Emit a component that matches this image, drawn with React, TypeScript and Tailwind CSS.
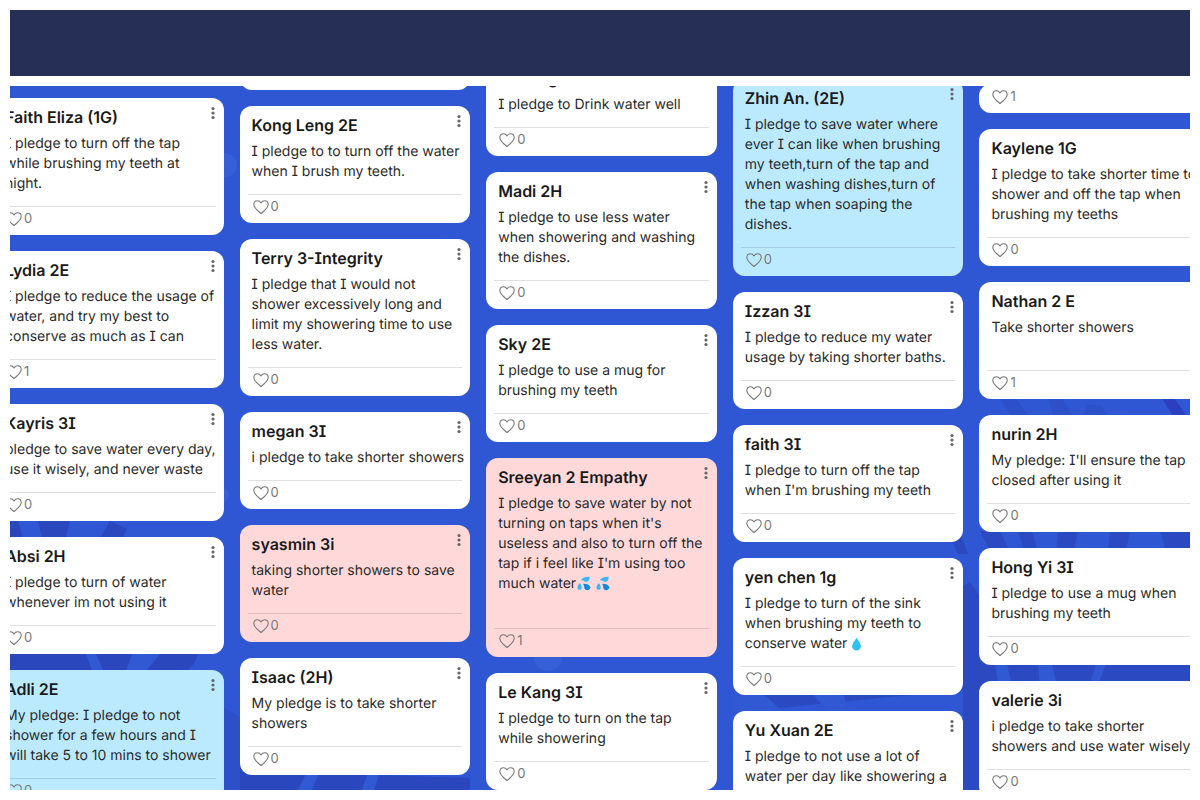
import { ReactNode } from "react";

type Tone = "white" | "pink" | "blue";
type Post = { title?: string; lines?: ReactNode[]; likes: number; tone?: Tone; spacer?: string };

const tones: Record<Tone, string> = {
  white: "bg-white",
  pink: "bg-[#ffd9d9]",
  blue: "bg-[#bbeaff]",
};

function Splash() {
  return (
    <svg viewBox="0 0 16 16" className="mr-1 inline-block size-[15px] align-[-3px]" role="img" aria-label="sweat droplets">
      <path d="M5 4.500C8 1 11 .5 14.500 .8c.4 2.700-.8 5-3 5.400C9 6.600 8.600 4 5 4.500z" fill="#39b8f5" />
      <path d="M7.500 8.500c3-.6 6.500.5 8 3.500-.8 2.700-3 3.800-5.200 2.700-2.300-1.200-.8-4-2.800-6.200z" fill="#1689d8" />
      <path d="M4 7.500c1.800 2.300 2.500 4.300 1.900 6-.6 1.500-2.600 1.700-3.700.6C.7 12.500 1.800 10 4 7.500z" fill="#39b8f5" />
    </svg>
  );
}

function Drop() {
  return (
    <svg viewBox="0 0 12 16" className="inline-block h-[14px] w-[11px] align-[-3px]" role="img" aria-label="droplet">
      <path d="M6 .8C8 4 11 7.500 11 10.500a5 5 0 0 1-10 0C1 7.500 4 4 6 .8z" fill="#29c1f6" />
    </svg>
  );
}

const columns: { offset: string; posts: Post[] }[] = [
  {
    offset: "mt-3",
    posts: [
      { title: "Faith Eliza (1G)", lines: ["I pledge to turn off the tap", "while brushing my teeth at", "night."], likes: 0 },
      { title: "Lydia 2E", lines: ["I pledge to reduce the usage of", "water, and try my best to", "conserve as much as I can"], likes: 1 },
      { title: "Kayris 3I", lines: ["pledge to save water every day,", "use it wisely, and never waste"], likes: 0 },
      { title: "Absi 2H", lines: ["I pledge to turn of water", "whenever im not using it"], likes: 0 },
      { title: "Adli 2E", lines: ["My pledge: I pledge to not", "shower for a few hours and I", "will take 5 to 10 mins to shower"], likes: 0, tone: "blue" },
    ],
  },
  {
    offset: "-mt-[25px]",
    posts: [
      { likes: 0 },
      { title: "Kong Leng 2E", lines: ["I pledge to to turn off the water", "when I brush my teeth."], likes: 0 },
      { title: "Terry 3-Integrity", lines: ["I pledge that I would not", "shower excessively long and", "limit my showering time to use", "less water."], likes: 0 },
      { title: "megan 3I", lines: ["i pledge to take shorter showers"], likes: 0 },
      { title: "syasmin 3i", lines: ["taking shorter showers to save", "water"], likes: 0, tone: "pink" },
      { title: "Isaac (2H)", lines: ["My pledge is to take shorter", "showers"], likes: 0 },
    ],
  },
  {
    offset: "-mt-[27px]",
    posts: [
      { title: "Zi Heng 2H", lines: ["I pledge to Drink water well"], likes: 0 },
      { title: "Madi 2H", lines: ["I pledge to use less water", "when showering and washing", "the dishes."], likes: 0 },
      { title: "Sky 2E", lines: ["I pledge to use a mug for", "brushing my teeth"], likes: 0 },
      {
        title: "Sreeyan 2 Empathy",
        lines: ["I pledge to save water by not", "turning on taps when it's", "useless and also to turn off the", "tap if i feel like I'm using too", <>much water<Splash /><Splash /></>],
        likes: 1,
        tone: "pink",
        spacer: "h-[22px]",
      },
      { title: "Le Kang 3I", lines: ["I pledge to turn on the tap", "while showering"], likes: 0 },
    ],
  },
  {
    offset: "-mt-[7px]",
    posts: [
      { title: "Zhin An. (2E)", lines: ["I pledge to save water where", "ever I can like when brushing", "my teeth,turn of the tap and", "when washing dishes,turn of", "the tap when soaping the", "dishes."], likes: 0, tone: "blue" },
      { title: "Izzan 3I", lines: ["I pledge to reduce my water", "usage by taking shorter baths."], likes: 0 },
      { title: "faith 3I", lines: ["I pledge to turn off the tap", "when I'm brushing my teeth"], likes: 0 },
      { title: "yen chen 1g", lines: ["I pledge to turn of the sink", "when brushing my teeth to", <>conserve water <Drop /></>], likes: 0 },
      { title: "Yu Xuan 2E", lines: ["I pledge to not use a lot of", "water per day like showering a"], likes: 0 },
    ],
  },
  {
    offset: "-mt-[2px]",
    posts: [
      { likes: 1 },
      { title: "Kaylene 1G", lines: ["I pledge to take shorter time to", "shower and off the tap when", "brushing my teeths"], likes: 0 },
      { title: "Nathan 2 E", lines: ["Take shorter showers"], likes: 1, spacer: "h-5" },
      { title: "nurin 2H", lines: ["My pledge: I'll ensure the tap is", "closed after using it"], likes: 0 },
      { title: "Hong Yi 3I", lines: ["I pledge to use a mug when", "brushing my teeth"], likes: 0 },
      { title: "valerie 3i", lines: ["i pledge to take shorter", "showers and use water wisely"], likes: 0 },
    ],
  },
];

function Card({ title, lines, likes, tone = "white", spacer }: Post) {
  return (
    <article className={`relative shrink-0 rounded-xl ${tones[tone]}`}>
      {title && (
        <>
          <h2 className="px-3 pt-[7px] text-[16px] leading-6 font-semibold whitespace-nowrap text-[#191919]">{title}</h2>
          <button type="button" aria-label={`Options for ${title}`} className="absolute top-[7px] right-[3px] flex h-4 w-4 items-center justify-center text-[#666]">
            <svg viewBox="0 0 4 14" className="h-[14px] w-1" fill="currentColor">
              <circle cx="2" cy="2.500" r="1.600" />
              <circle cx="2" cy="7" r="1.600" />
              <circle cx="2" cy="11.500" r="1.600" />
            </svg>
          </button>
          <div className="mt-[5px] px-3 pb-3 text-[14px] leading-5 whitespace-nowrap text-[#2a2a2a]">
            {lines?.map((line, i) => <p key={i}>{line}</p>)}
            {spacer && <div className={spacer} />}
          </div>
        </>
      )}
      <footer className="mx-2 border-t border-black/12 pb-1">
        <button type="button" aria-label={`Like, ${likes}`} className="flex h-6 items-center gap-[2px] px-[5px] text-[13px] text-[#777]">
          <svg viewBox="0 0 16 16" className="size-4" fill="none" stroke="currentColor" strokeWidth="1.100" strokeLinejoin="round">
            <path d="M8 14.500C5.500 12.400 .8 9 .8 5.500.8 3.200 2.400 1.700 4.400 1.700 6 1.700 7.200 2.500 8 3.900c.8-1.400 2-2.200 3.600-2.200 2 0 3.600 1.500 3.600 3.800 0 3.500-4.700 6.900-7.200 9z" />
          </svg>
          {likes}
        </button>
      </footer>
    </article>
  );
}

function Backdrop() {
  return (
    <svg className="absolute inset-0 h-full w-full" viewBox="0 0 1180 704" preserveAspectRatio="none" aria-hidden="true">
      <g fill="#3560d7">
        <circle cx="215" cy="79" r="12" />
        <circle cx="211" cy="409" r="8" />
        <circle cx="538" cy="571" r="14" />
      </g>
      <g fill="#2a47bd">
        <path d="M0 435h8l6 20H0zM28 435h32l-6 24H34zM100 435l17 8-8 16H86z" />
        <path d="M0 568h188q-4 16-22 22H0z" />
        <path d="M214 680q100 8 246 12v12H214z" />
        <path d="M725 610q120-4 228-10v104h17V575h210v51H970v-116l-10-14-7 4v104l-228 22z" opacity=".8" />
        <path d="M938 446h12l8 22h-10zM970 445h20l10 20h-20zM1008 445h14l6 20h-14zM1048 445h20l-4 20h-18zM1100 445h20l-4 20h-18zM1150 445h30v20h-24z" opacity=".8" />
      </g>
      <g fill="#2d50c9">
        <path d="M990 312h16l14 20h-18zM1038 312h14l12 20h-20zM1072 332l6-14 14 2 6 12z" />
        <path d="M1152 312h12l14 20h-14z" fill="#2b3fc0" />
        <path d="M214 622q12 6 16 10v72H214z" />
      </g>
      <g fill="#3159d3">
        <path d="M76 568h10l10 22H84zM122 568h28l-18 22h-18zM985 578h12l6 26h-14zM1028 578h14l6 26h-18zM1086 578h10l-10 26h-8z" />
        <path d="M725 600h20l28 26h-48zM795 600h36l8 26h-20z" />
        <path d="M300 680h12l-10 24h-14zM360 680l12 0-8 24h-12z" />
      </g>
    </svg>
  );
}

export default function App() {
  return (
    <div className="flex h-screen flex-col gap-[10px] bg-white p-[10px] font-['Inter',sans-serif] [font-feature-settings:'cv08'] [text-rendering:geometricPrecision]">
      <header className="h-[66px] shrink-0 bg-[#262f55]" />
      <main className="relative min-h-0 flex-1 overflow-hidden bg-[#2f57d3]">
        <Backdrop />
        <div className="relative -mr-5 -ml-[17px] grid grid-cols-5 gap-4">
          {columns.map((column, i) => (
            <section key={i} className={`flex min-w-0 flex-col gap-4 ${column.offset}`}>
              {column.posts.map((post, j) => <Card key={j} {...post} />)}
            </section>
          ))}
        </div>
      </main>
    </div>
  );
}
